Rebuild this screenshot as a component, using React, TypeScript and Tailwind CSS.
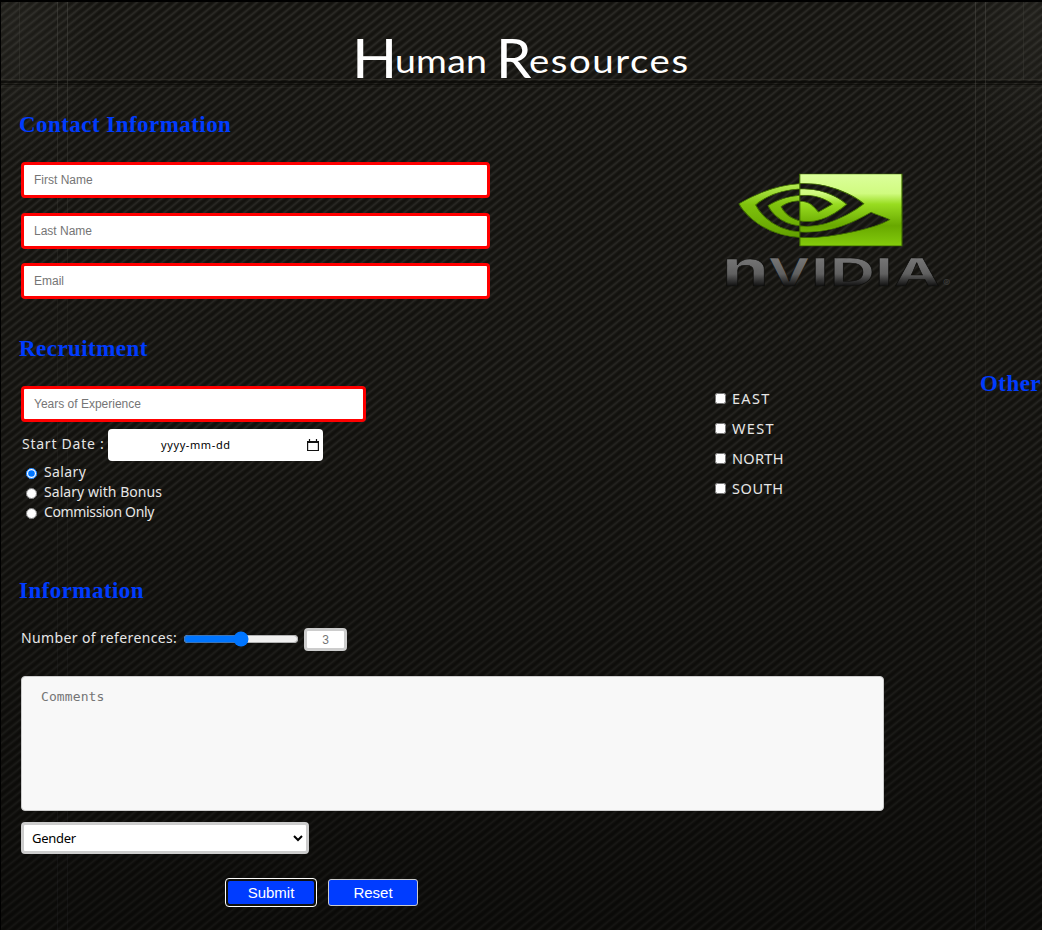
import React from 'react';

const label = "font-['Noto_Sans'] text-[14px] leading-5 text-[#e6e6e6]";
const heading =
  "font-['Liberation_Serif'] font-bold text-[23px] leading-[26px] tracking-[0.45px] text-[#003cff] whitespace-nowrap";
const field =
  "block h-9 rounded-[4px] border-[3px] border-[#ff0000] bg-white px-2.5 font-['Liberation_Sans'] text-[12px] placeholder:text-[#757575] outline-none";

const payOptions = [
  { text: 'Salary', tracking: 'tracking-[0.4px]' },
  { text: 'Salary with Bonus', tracking: 'tracking-[0.05px]' },
  { text: 'Commission Only', tracking: 'tracking-[-0.35px]' },
];

const regions = [
  { text: 'EAST', tracking: 'tracking-[1.3px]' },
  { text: 'WEST', tracking: 'tracking-[1.3px]' },
  { text: 'NORTH', tracking: 'tracking-[0.3px]' },
  { text: 'SOUTH', tracking: 'tracking-[0.6px]' },
];

function Backdrop() {
  return (
    <svg className="absolute inset-0 -z-10" width="1042" height="930" aria-hidden="true">
      <defs>
        <pattern id="twill" width="10" height="8" patternUnits="userSpaceOnUse">
          <rect width="10" height="8" fill="#14130f" />
          <path d="M-5 12L15 -4M-5 4L5 -4M5 12L15 4" stroke="#1b1a16" strokeWidth="4" />
          <path d="M-5 12L15 -4M-5 4L5 -4M5 12L15 4" stroke="#292824" strokeWidth="1.7" />
        </pattern>
        <linearGradient id="shade" x1="0" y1="0" x2="0" y2="1">
          <stop offset="0" stopColor="#000" stopOpacity="0" />
          <stop offset="0.4" stopColor="#000" stopOpacity="0.1" />
          <stop offset="1" stopColor="#000" stopOpacity="0.5" />
        </linearGradient>
        <radialGradient id="corner">
          <stop offset="0" stopColor="#4a4943" stopOpacity="0.22" />
          <stop offset="1" stopColor="#4a4943" stopOpacity="0" />
        </radialGradient>
        <linearGradient id="seam" x1="0" y1="0" x2="0" y2="1">
          <stop offset="0" stopColor="#4c4b46" stopOpacity="0.5" />
          <stop offset="0.35" stopColor="#44433e" stopOpacity="0.15" />
          <stop offset="1" stopColor="#33333a" stopOpacity="0.2" />
        </linearGradient>
      </defs>
      <rect width="1042" height="930" fill="url(#twill)" />
      <rect width="1042" height="930" fill="url(#shade)" />
      <ellipse cx="10" cy="20" rx="90" ry="150" fill="url(#corner)" />
      <ellipse cx="1032" cy="20" rx="90" ry="150" fill="url(#corner)" />
      <rect y="81" width="1042" height="2" fill="#080805" opacity="0.7" />
      <rect y="79" width="1042" height="1" fill="#383731" opacity="0.6" />
      <rect y="84" width="1042" height="1" fill="#080805" opacity="0.6" />
      <rect y="87" width="1042" height="1" fill="#383731" opacity="0.3" />
      <rect x="57" width="1" height="930" fill="url(#seam)" />
      <rect x="67" width="1" height="930" fill="url(#seam)" />
      <rect x="975" width="1" height="930" fill="url(#seam)" />
      <rect x="985" width="1" height="930" fill="url(#seam)" />
      <rect x="19" width="1" height="80" fill="#494842" opacity="0.3" />
      <rect x="1023" width="1" height="80" fill="#494842" opacity="0.3" />
      <path d="M0 0H1042V2H1V930H0Z" fill="#000" />
    </svg>
  );
}

function Logo() {
  return (
    <svg className="overflow-visible" width="236" height="124" viewBox="720 170 236 124" role="img" aria-label="NVIDIA">
      <defs>
        <linearGradient id="metal" x1="0" y1="258" x2="0" y2="287" gradientUnits="userSpaceOnUse">
          <stop offset="0" stopColor="#767676" />
          <stop offset="0.55" stopColor="#606060" />
          <stop offset="0.8" stopColor="#303030" />
          <stop offset="1" stopColor="#0a0a0a" />
        </linearGradient>
        <linearGradient id="eyeRight" x1="0" y1="4.06" x2="0" y2="19.94" gradientUnits="userSpaceOnUse">
          <stop offset="0" stopColor="#dcff9c" />
          <stop offset="0.27" stopColor="#d0fb80" />
          <stop offset="0.42" stopColor="#98dc20" />
          <stop offset="0.72" stopColor="#68a800" />
          <stop offset="1" stopColor="#84cc0c" />
        </linearGradient>
        <linearGradient id="eyeLeft" x1="0" y1="6" x2="0" y2="18" gradientUnits="userSpaceOnUse">
          <stop offset="0" stopColor="#b8ee58" />
          <stop offset="0.4" stopColor="#7fc20c" />
          <stop offset="1" stopColor="#62a000" />
        </linearGradient>
      </defs>
      <g transform="translate(739 155.6) scale(6.79 4.53)" stroke="#416f00" strokeWidth="0.16">
        <path
          fill="url(#eyeRight)"
          d="M8.948 8.798v-1.43a6.7 6.7 0 0 1 .424-.018c3.922-.124 6.493 3.374 6.493 3.374s-2.774 3.851-5.75 3.851c-.398 0-.787-.062-1.158-.185v-4.346c1.528.185 1.837.857 2.747 2.385l2.04-1.714s-1.492-1.952-4-1.952a6.016 6.016 0 0 0-.796.035m0-4.735v2.138l.424-.027c5.45-.185 9.01 4.47 9.01 4.47s-4.08 4.964-8.33 4.964c-.37 0-.733-.035-1.095-.097v1.325c.3.035.61.062.91.062 3.957 0 6.82-2.023 9.593-4.408.459.371 2.34 1.263 2.73 1.652-2.633 2.208-8.772 3.984-12.253 3.984-.335 0-.653-.018-.971-.053v1.864H24V4.063z"
        />
        <path
          fill="url(#eyeLeft)"
          d="M8.948 14.389v1.131c-3.657-.654-4.673-4.46-4.673-4.46s1.758-1.944 4.673-2.262v1.237H8.94c-1.528-.186-2.73 1.245-2.73 1.245s.68 2.412 2.739 3.11M2.456 10.9s2.164-3.197 6.5-3.533V6.201C4.153 6.59 0 10.653 0 10.653s2.35 6.802 8.948 7.42v-1.237c-4.84-.6-6.492-5.936-6.492-5.936z"
        />
      </g>
      <g className="font-['Inter'] font-bold" fill="url(#metal)" stroke="#0c0c0a" strokeWidth="0.5">
        <text x="722" y="286" fontSize="50" textLength="47" lengthAdjust="spacingAndGlyphs">n</text>
        <text x="768" y="286" fontSize="38" textLength="42" lengthAdjust="spacingAndGlyphs">V</text>
        <text x="811" y="286" fontSize="38" textLength="18" lengthAdjust="spacingAndGlyphs">I</text>
        <text x="830" y="286" fontSize="38" textLength="45" lengthAdjust="spacingAndGlyphs">D</text>
        <text x="875" y="286" fontSize="38" textLength="18" lengthAdjust="spacingAndGlyphs">I</text>
        <text x="894" y="286" fontSize="38" textLength="46" lengthAdjust="spacingAndGlyphs">A</text>
        <text x="943" y="287" fontSize="11" style={{ fill: '#3a3a38' }} stroke="none">®</text>
      </g>
    </svg>
  );
}

export default function App() {
  return (
    <main className="relative isolate h-[930px] w-[1042px] overflow-hidden bg-[#14130f]">
      <Backdrop />
      <h1 className="flex h-[112px] items-baseline pl-[352px] pt-[23px] font-['Lato'] text-[32px] leading-[60px] text-white">
        <span className="w-[43px] origin-left translate-y-[5px] scale-x-110 text-[54px]">H</span>
        <span className="w-[101px] origin-left scale-x-[1.17] tracking-[0.2px]">uman</span>
        <span className="w-[33px] origin-left translate-y-[5px] scale-x-105 text-[54px]">R</span>
        <span className="w-[160px] origin-left scale-x-[1.2] tracking-[1.3px]">esources</span>
      </h1>

      <section className="flex h-[224px] justify-between">
        <div className="pl-[21px]">
          <h2 className={`${heading} -ml-0.5 mb-6`}>Contact Information</h2>
          <div className="flex flex-col gap-[15px]">
            <input className={`${field} w-[469px]`} placeholder="First Name" />
            <input className={`${field} w-[469px]`} placeholder="Last Name" />
            <input className={`${field} -mt-px w-[469px]`} placeholder="Email" />
          </div>
        </div>
        <div className="pr-[86px] pt-[58px]">
          <Logo />
        </div>
      </section>

      <section className="flex h-[242px] justify-between">
        <div className="w-[469px] pl-[21px]">
          <h2 className={`${heading} -ml-0.5 mb-6`}>Recruitment</h2>
          <input className={`${field} w-[345px]`} placeholder="Years of Experience" />
          <div className="mt-[7px] flex items-center">
            <span className={`${label} w-[87px] whitespace-nowrap pb-[3px] pl-px tracking-[0.75px]`}>Start Date :</span>
            <div className="flex h-8 w-[215px] items-center justify-between rounded-[4px] bg-white pl-[53px] pr-1 font-['Noto_Sans'] text-[11px] text-black">
              <span className="tracking-[0.6px]">yyyy-mm-dd</span>
              <svg width="12" height="13" viewBox="0 0 12 13" fill="none" stroke="#111">
                <path d="M0.6 2.5h10.8v9H0.6zM2.5 0v2M9.5 0v2" strokeWidth="1.2" />
                <path d="M0 3h12" strokeWidth="2" />
              </svg>
            </div>
          </div>
          <div className="mt-px pl-[5px]">
            {payOptions.map((o, i) => (
              <label key={o.text} className={`${label} ${o.tracking} flex h-5 items-center gap-[7px]`}>
                <input type="radio" name="pay" defaultChecked={i === 0} className="mt-[2px] size-[11px]" />
                {o.text}
              </label>
            ))}
          </div>
        </div>
        <div className="flex w-[327px]">
          <div className="w-[265px] pt-[48px]">
            {regions.map((o) => (
              <label key={o.text} className={`${label} ${o.tracking} flex h-[30px] items-center gap-[6px]`}>
                <input type="checkbox" className="mb-px size-[11px]" />
                <span className="pb-[3px] text-[14.5px]">{o.text}</span>
              </label>
            ))}
          </div>
          <h2 className={`${heading} pt-[35px]`}>Other</h2>
        </div>
      </section>

      <section className="pl-[21px]">
        <h2 className={`${heading} -ml-0.5`}>Information</h2>
        <div className="mt-[23px] flex h-[25px] items-center">
          <span className={`${label} w-[162px] whitespace-nowrap pb-[3px] tracking-[0.37px]`}>Number of references:</span>
          <input type="range" min="1" max="5" defaultValue="3" className="mb-0.5 w-[116px]" />
          <input
            placeholder="3"
            className="ml-[5px] h-[23px] w-[43px] rounded-[4px] border-[3px] border-[#ccc] bg-white text-center font-['Liberation_Sans'] text-[12px] placeholder:text-[#757575]"
          />
        </div>
        <textarea
          placeholder="Comments"
          className="mt-[24px] block h-[135px] w-[863px] resize-none rounded-[4px] border border-[#ccc] bg-[#f8f8f8] px-[19px] py-3 font-['DejaVu_Sans_Mono'] text-[13px] leading-4 tracking-[0.1px] placeholder:text-[#757575]"
        />
        <select className="mt-[11px] block h-8 w-[288px] rounded-[4px] border-[3px] border-[#ccc] bg-white px-1 font-['Noto_Sans'] text-[13px] tracking-[-0.3px] text-black">
          <option>Gender</option>
        </select>
        <div className="mt-6 flex items-center gap-[11px] pl-[204px] font-['Liberation_Sans'] text-[15px] text-white">
          <div className="rounded-[4px] border border-white bg-[#11110d] p-0.5">
            <button className="block h-[23px] w-[86px] rounded-[2px] bg-[#003cff] pt-px">Submit</button>
          </div>
          <button className="h-[27px] w-[90px] rounded-[3px] border border-[#ccc] bg-[#003cff] pt-px">Reset</button>
        </div>
      </section>
    </main>
  );
}
